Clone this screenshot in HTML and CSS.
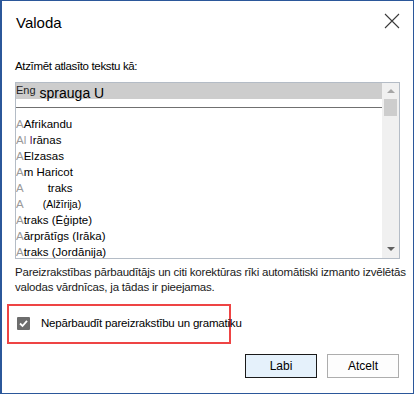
FILE: index.html
```html
<!DOCTYPE html>
<html lang="lv">
<head>
    <meta charset="UTF-8">
    <meta name="viewport" content="width=device-width, initial-scale=1.0">
    <title>Valoda</title>
    <link rel="stylesheet" href="styles.css">
</head>
<body>
    <div class="dialogs">
        <div class="virsraksts">
            <span class="nosaukums">Valoda</span>
            <svg class="aizvert" width="16" height="16" viewBox="0 0 16 16">
                <path d="M1 1 L15 15 M15 1 L1 15" stroke="#3a3a3a" stroke-width="1.1" fill="none"/>
            </svg>
        </div>
        <div class="saturs">
            <div class="uzaicinajums">Atzīmēt atlasīto tekstu kā:</div>
            <div class="saraksts">
                <div class="saraksta-iekspuse">
                    <div class="galva"><span class="eng">Eng</span><span class="sprauga">sprauga U</span></div>
                    <div class="atdalitajs"></div>
                    <ul class="rindas">
                        <li><span class="a">A</span>Afrikandu</li>
                        <li><span class="a">A</span><span class="a">l</span> <span class="violets">I</span>rānas</li>
                        <li><span class="a">A</span>Elzasas</li>
                        <li><span class="a">A</span>m Haricot</li>
                        <li><span class="a">A</span><span class="atstarpe-liela">traks</span></li>
                        <li><span class="a">A</span><span class="atstarpe-maza mazs">(Alžīrija)</span></li>
                        <li><span class="a">A</span>traks (Ēģipte)</li>
                        <li><span class="a">A</span>ārprātīgs (Irāka)</li>
                        <li><span class="a">A</span>traks (Jordānija)</li>
                    </ul>
                </div>
                <div class="ritjosla">
                    <span class="bulta-augsa"></span>
                    <span class="rokturis"></span>
                    <span class="bulta-leja"></span>
                </div>
            </div>
            <p class="piezime">Pareizrakstības pārbaudītājs un citi korektūras rīki automātiski izmanto izvēlētās<br>valodas vārdnīcas, ja tādas ir pieejamas.</p>
            <div class="izcelts">
                <label class="atzime">
                    <span class="kaste">
                        <svg width="13" height="13" viewBox="0 0 13 13">
                            <path d="M3 6.5 L5.5 9 L10 3.8" stroke="#fff" stroke-width="1.8" fill="none"/>
                        </svg>
                    </span>
                    Nepārbaudīt pareizrakstību un gramatiku
                </label>
            </div>
            <div class="pogas">
                <button class="poga galvena">Labi</button>
                <button class="poga">Atcelt</button>
            </div>
        </div>
    </div>
</body>
</html>
```

FILE: styles.css
```css
body {
    margin: 0;
    background-color: #fff;
    font-family: "Liberation Sans", Arial, sans-serif;
    font-size: 11.5px;
    color: #000;
}
.dialogs {
    width: 414px;
    height: 394px;
    box-sizing: border-box;
    border: 1px solid #2b579a;
    border-left-width: 2px;
    background-color: #fff;
    overflow: hidden;
}
.virsraksts {
    display: flex;
    justify-content: space-between;
    align-items: center;
    padding: 12px 13px 0 14px;
    height: 20px;
}
.nosaukums {
    font-size: 15px;
    line-height: 20px;
}
.aizvert {
    margin-top: -5px;
}
.saturs {
    padding: 0 13px 0 13px;
}
.uzaicinajums {
    margin-top: 26px;
    line-height: 15px;
    letter-spacing: -0.35px;
}
.saraksts {
    margin-top: 8px;
    height: 177px;
    box-sizing: border-box;
    border: 1px solid #b4bcc6;
    display: flex;
}
.saraksta-iekspuse {
    flex: 1;
    overflow: hidden;
}
.galva {
    height: 16px;
    background-color: #cdcdcd;
    display: flex;
    align-items: flex-end;
    white-space: nowrap;
}
.eng {
    font-size: 11px;
    line-height: 14px;
    color: #222;
    margin-bottom: 2px;
}
.sprauga {
    font-size: 14px;
    line-height: 16px;
    margin-left: 4px;
    margin-bottom: -2px;
}
.atdalitajs {
    margin-top: 8px;
    border-top: 1px solid #707070;
}
.rindas {
    list-style: none;
    margin: 8px 0 0 0;
    padding: 0;
}
.rindas li {
    line-height: 16px;
    white-space: nowrap;
}
.a {
    color: #9a9a9a;
}
.violets {
    color: #5a1a6a;
}
.atstarpe-liela {
    padding-left: 24px;
}
.atstarpe-maza {
    padding-left: 19px;
}
.mazs {
    font-size: 10.5px;
}
.ritjosla {
    width: 17px;
    background-color: #f0f0f0;
    position: relative;
}
.bulta-augsa {
    position: absolute;
    left: 5px;
    top: 6px;
    border-left: 4px solid transparent;
    border-right: 4px solid transparent;
    border-bottom: 4px solid #a6a6a6;
}
.rokturis {
    position: absolute;
    left: 2px;
    top: 16px;
    width: 13px;
    height: 17px;
    background-color: #cdcdcd;
}
.bulta-leja {
    position: absolute;
    left: 5px;
    bottom: 7px;
    border-left: 4px solid transparent;
    border-right: 4px solid transparent;
    border-top: 4px solid #606060;
}
.piezime {
    margin: 6px 0 0 0;
    line-height: 15px;
    color: #1a1a1a;
    letter-spacing: -0.2px;
    white-space: nowrap;
}
.izcelts {
    margin: 9px 0 0 -8px;
    width: 224px;
    height: 40px;
    box-sizing: border-box;
    border: 2px solid #ee4444;
}
.atzime {
    display: flex;
    align-items: center;
    margin-top: 11px;
    margin-left: 8px;
    white-space: nowrap;
    line-height: 13px;
    letter-spacing: -0.2px;
}
.kaste {
    width: 13px;
    height: 13px;
    background-color: #6d6d6d;
    border-radius: 1px;
    margin-right: 11px;
    display: flex;
}
.pogas {
    display: flex;
    justify-content: flex-end;
    gap: 10px;
    margin-top: 10px;
    margin-right: 1px;
}
.poga {
    width: 72px;
    height: 24px;
    font-family: "Liberation Sans", Arial, sans-serif;
    font-size: 12px;
    background-color: #fdfdfd;
    border: 1px solid #adadad;
    padding: 0;
    color: #000;
}
.galvena {
    background-color: #e5f1fb;
    border-color: #1a1a1a;
}
```
